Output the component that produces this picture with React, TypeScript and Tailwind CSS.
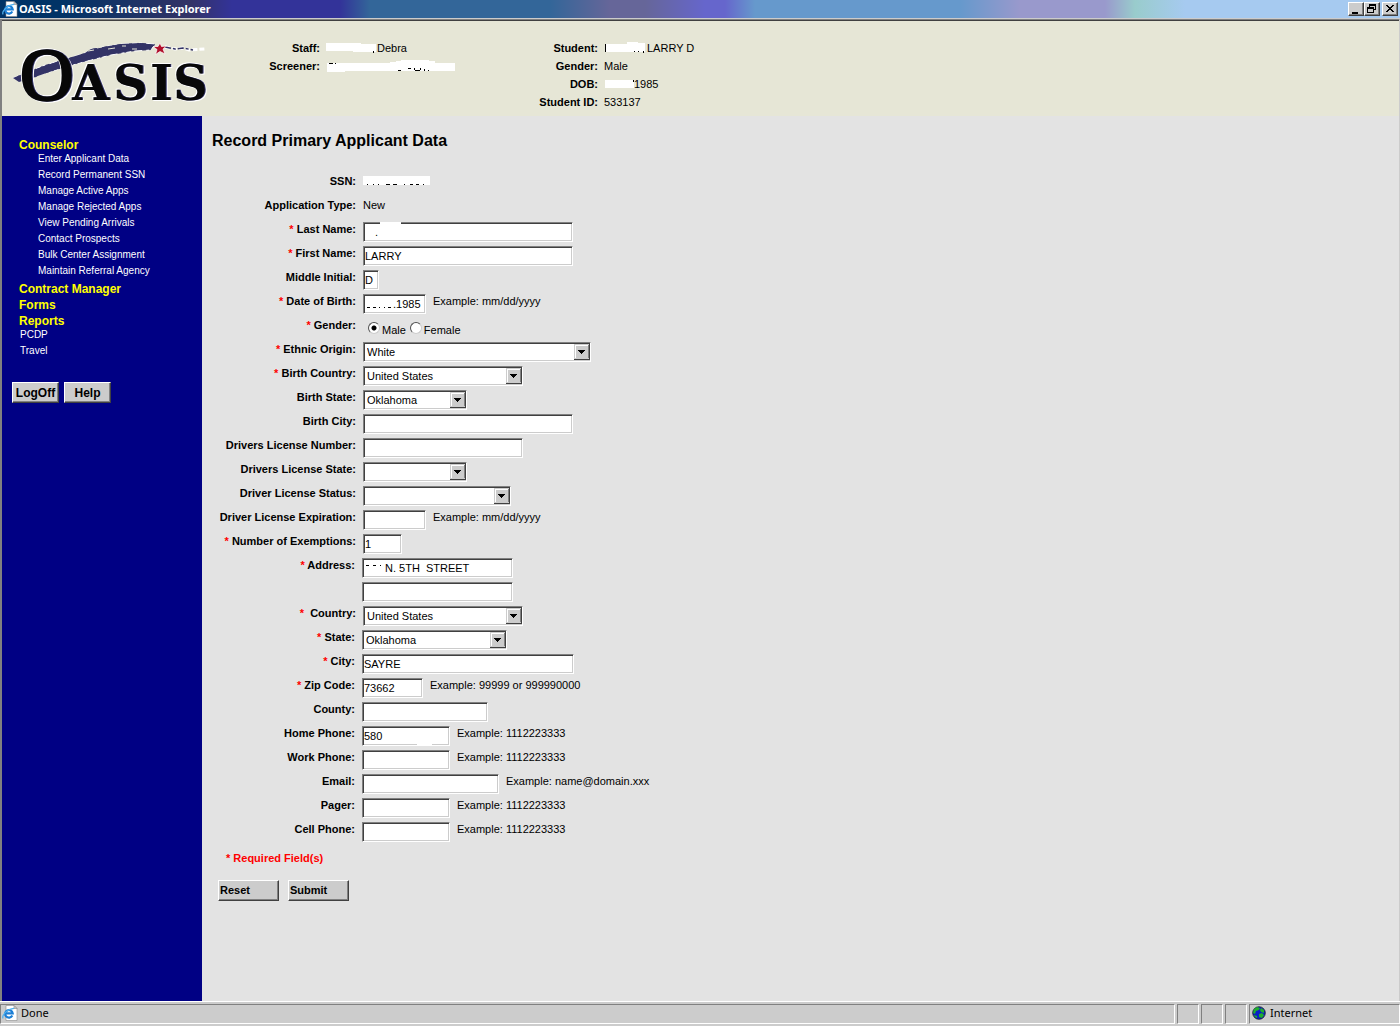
import { useState } from 'react';
import type { ReactNode } from 'react';

const SUNKEN =
  'border border-t-[#808080] border-l-[#808080] border-r-white border-b-white shadow-[inset_1px_1px_0_#404040,inset_-1px_-1px_0_#cccccc]';
const RAISED =
  'border border-t-white border-l-white border-r-[#404040] border-b-[#404040] bg-[#cccccc] shadow-[inset_-1px_-1px_0_#808080]';

const COUNSELOR_LINKS = [
  'Enter Applicant Data',
  'Record Permanent SSN',
  'Manage Active Apps',
  'Manage Rejected Apps',
  'View Pending Arrivals',
  'Contact Prospects',
  'Bulk Center Assignment',
  'Maintain Referral Agency',
];

interface RowProps {
  label: string;
  htmlFor?: string;
  required?: boolean;
  hint?: string;
  labelWidth?: string;
  children?: ReactNode;
}

function Row({ label, htmlFor, required, hint, labelWidth = 'w-[154px]', children }: RowProps) {
  return (
    <div className="flex h-6 items-start">
      <label htmlFor={htmlFor} className={`${labelWidth} mr-[7px] shrink-0 text-right font-bold leading-[18px] whitespace-nowrap`}>
        {required && <span className="text-[#ff0000]">* </span>}
        {label}
      </label>
      {children}
      {hint && <span className="ml-[7px] leading-[18px] whitespace-nowrap">{hint}</span>}
    </div>
  );
}

interface TextFieldProps {
  id: string;
  label?: string;
  value?: string;
  className: string;
  children?: ReactNode;
}

function TextField({ id, label, value = '', className, children }: TextFieldProps) {
  const [text, setText] = useState(value);
  return (
    <span className="relative mt-[2px] flex">
      <input
        id={id}
        aria-label={label}
        type="text"
        value={text}
        onChange={(e) => setText(e.target.value)}
        className={`h-5 rounded-none bg-white pr-0 outline-none ${SUNKEN} ${className}`}
      />
      {children}
    </span>
  );
}

function SelectField({ id, options, className }: { id: string; options: string[]; className: string }) {
  return (
    <span className="relative mt-[2px] flex">
      <select id={id} className={`h-5 appearance-none rounded-none bg-white pl-[3px] outline-none ${SUNKEN} ${className}`}>
        {options.map((o) => (
          <option key={o}>{o}</option>
        ))}
      </select>
      <svg className="pointer-events-none absolute top-[2px] right-px" width="16" height="16" viewBox="0 0 16 16" shapeRendering="crispEdges">
        <path fill="#404040" d="M0 0h16v16H0z" />
        <path fill="#ccc" d="M0 0h15v15H0z" />
        <path fill="#808080" d="M1 14h14V1h-1v13H1z" />
        <path fill="#fff" d="M1 1h13v1H2v12H1z" />
        <path fill="#000" d="M4 6h7v1H4zM5 7h5v1H5zM6 8h3v1H6zM7 9h1v1H7z" />
      </svg>
    </span>
  );
}

function Radio({ id, label, checked, onChange }: { id: string; label: string; checked: boolean; onChange: () => void }) {
  return (
    <span className="flex items-start">
      <input
        id={id}
        type="radio"
        name="gender"
        checked={checked}
        onChange={onChange}
        className="mt-[6px] h-3 w-3 appearance-none rounded-full border border-t-[#505050] border-l-[#505050] border-r-[#cccccc] border-b-[#cccccc] bg-white checked:bg-[radial-gradient(circle,#000_0_2px,#fff_3px)]"
      />
      <label htmlFor={id} className="ml-[2px] leading-7">{label}</label>
    </span>
  );
}

function IeIcon({ className }: { className: string }) {
  return (
    <svg className={className} width="16" height="16" viewBox="0 0 16 16">
      <path d="M4 .5h8l3 3v12H4z" fill="#fff" stroke="#8a8a8a" strokeWidth=".6" />
      <path d="M12 .5v3h3z" fill="#ccc" stroke="#8a8a8a" strokeWidth=".6" />
      <path d="M10.3 10.600A3.800 3.800 0 1 1 10.700 8.300H3.500" fill="none" stroke="#1c7fd6" strokeWidth="2.200" />
      <path d="M1.200 13.400C-.8 11 5 3.800 12 3.300" fill="none" stroke="#4db0f0" strokeWidth="1.200" />
    </svg>
  );
}

function Logo() {
  return (
    <svg className="shrink-0 overflow-visible" width="214" height="95" viewBox="2 21 214 95" role="img" aria-label="Oasis">
      <path
        d="M13 78l12-5 20-8 14-4 10-3 16-5 6-4 18-3 12-2 20-1 14 1-4 6-16 1-24 4-28 7-14 4-16 5-14 4-8 5z"
        fill="#333366"
        stroke="#fff"
        strokeWidth="1"
        strokeDasharray="5 2 3 4 8 3"
      />
      <path d="M13 78l12-5 20-7 14-5 10-3 16-5 6-4 18-3 12-2 20-1 14 2-6 4-16 1-22 4-26 7-14 4-16 5-20 7-16 5z" fill="#333366" />
      <path d="M88 51l6-1M97 48l5-1M108 49l7-1M122 46l4 0M132 49l5 0" stroke="#e6e6d6" strokeWidth="1" />
      <path d="M165 47l10 2 8-1 6 2 16-1" stroke="#fff" strokeWidth="3" strokeDasharray="5 2" fill="none" />
      <path d="M165 47l10 2 8-1 10 2" stroke="#333366" strokeWidth="1.500" strokeDasharray="6 2 3 2" fill="none" />
      <path d="M160 43l1.500 3.500 5-.5-3.500 3 2 5-5-2.500-4.500 3 1.500-5-4-3h5z" fill="#b0102c" stroke="#fff" strokeWidth=".7" />
      <g
        className="[filter:drop-shadow(1px_0_0_#333366)_drop-shadow(1px_1px_0_#fff)_drop-shadow(-1px_-1px_0_#fff)]"
        fill="#080808"
        stroke="#080808"
      >
        <text y="100" fontSize="48" strokeWidth="0" fontWeight="bold" fontFamily="DejaVu Serif, serif">
          <tspan x="20" fontSize="74" strokeWidth="2.500" fontWeight="normal" fontFamily="Liberation Serif, serif">O</tspan>
          <tspan x="72">A</tspan>
          <tspan x="113">S</tspan>
          <tspan x="150">I</tspan>
          <tspan x="173">S</tspan>
        </text>
      </g>
    </svg>
  );
}

function HeaderItem({ label, children }: { label: string; children: ReactNode }) {
  return (
    <div className="flex h-[18px] items-center">
      <dt className="w-[72px] text-right font-bold">{label}</dt>
      <dd className="ml-[6px] flex items-center whitespace-nowrap">{children}</dd>
    </div>
  );
}

function TitleBar() {
  return (
    <header className="flex h-[18px] items-center bg-[linear-gradient(90deg,#003366_0_60px,#333366_190px,#333399_232px_340px,#336699_370px_550px,#666699_610px_645px,#6666cc_705px_725px,#6699cc_755px_960px,#9999cc_1020px_1105px,#99cccc_1135px,#a6caf0_1185px)] pl-[2px]">
      <IeIcon className="shrink-0" />
      <h1 className="ml-px font-['Noto_Sans',sans-serif] text-[11px] font-bold whitespace-nowrap text-white">
        OASIS - Microsoft Internet Explorer
      </h1>
      <div className="mr-[2px] ml-auto flex">
        <button aria-label="Minimize" className={`h-[14px] w-4 ${RAISED}`}>
          <svg width="14" height="12" viewBox="0 0 14 12" shapeRendering="crispEdges"><path d="M3 9h6v2H3z" /></svg>
        </button>
        <button aria-label="Restore" className={`h-[14px] w-4 ${RAISED}`}>
          <svg width="14" height="12" viewBox="0 0 14 12" shapeRendering="crispEdges"><path d="M4 1h7v6H9v3H2V4h2zm1 2v1h4v2h1V3zM3 6v3h5V6z" fillRule="evenodd" /></svg>
        </button>
        <button aria-label="Close" className={`ml-[2px] h-[14px] w-4 ${RAISED}`}>
          <svg width="14" height="12" viewBox="0 0 14 12" shapeRendering="crispEdges"><path d="M3 2h2v1h1v1h2V3h1V2h2v1h-1v1H9v1H8v1h1v1h1v1h1v1H9V8H8V7H6v1H5v1H3V8h1V7h1V6h1V5H5V4H4V3H3z" /></svg>
        </button>
      </div>
    </header>
  );
}

function StatusBar() {
  const panel = 'border border-t-[#808080] border-l-[#808080] border-r-white border-b-white';
  return (
    <footer className="flex h-[25px] gap-[2px] border-t border-white bg-[#cccccc] pt-[2px] pb-[2px] font-['Noto_Sans',sans-serif] text-[11px] leading-4">
      <div className={`flex flex-1 items-start ${panel}`}>
        <IeIcon className="ml-px" />
        <span className="ml-[3px]">Done</span>
      </div>
      <div className={`w-[22px] ${panel}`} />
      <div className={`w-[22px] ${panel}`} />
      <div className={`w-[22px] ${panel}`} />
      <div className={`flex w-[151px] items-start ${panel}`}>
        <svg className="mt-px ml-[2px]" width="14" height="14" viewBox="0 0 14 14">
          <circle cx="7" cy="7" r="6.300" fill="#0a1fc8" stroke="#222" strokeWidth=".8" />
          <path d="M2 3l3-2 3 1-1 2-3 1-1 3-2-1zM9 2l3 2v3L9 6 8 4zM7 8l3-1 2 2-2 3-3-1zM2 9l3 1v2L3 11z" fill="#1fae2c" />
        </svg>
        <span className="ml-[4px]">Internet</span>
      </div>
    </footer>
  );
}

function Sidebar() {
  const section = 'block text-xs leading-4 font-bold text-[#ffff00]';
  return (
    <nav className="w-[200px] shrink-0 bg-[#000084] pt-[21px] text-white">
      <div className="pl-[17px] text-[10px] leading-4">
        <a href="#counselor" className={section}>Counselor</a>
        <ul className="-mt-[2px] mb-[2px] pl-[19px]">
          {COUNSELOR_LINKS.map((link) => (
            <li key={link}><a href="#link">{link}</a></li>
          ))}
        </ul>
        <a href="#contract" className={section}>Contract Manager</a>
        <a href="#forms" className={section}>Forms</a>
        <a href="#reports" className={section}>Reports</a>
        <div className="-mt-[2px] pl-px">
          <a href="#pcdp" className="block">PCDP</a>
          <a href="#travel" className="block">Travel</a>
        </div>
      </div>
      <div className="mt-[23px] flex gap-[5px] pl-[10px] text-xs font-bold text-black">
        <button className={`h-[21px] w-[47px] ${RAISED}`}>LogOff</button>
        <button className={`h-[21px] w-[47px] ${RAISED}`}>Help</button>
      </div>
    </nav>
  );
}

function ApplicantForm() {
  const [gender, setGender] = useState('Male');
  const narrow = 'w-[153px]';

  return (
    <form onSubmit={(e) => e.preventDefault()}>
      <Row label="SSN:">
        <svg className="mt-1" width="67" height="9" viewBox="0 0 67 9" shapeRendering="crispEdges">
          <path fill="#fff" d="M0 0h67v9H0z" />
          <path d="M4 8h1v1h-1zM10 8h1v1h-1zM15 8h1v1h-1zM23 8h4v1h-4zM30 8h4v1h-4zM41 8h1v1h-1zM47 8h3v1h-3zM53 8h3v1h-3zM60 8h1v1h-1z" />
        </svg>
      </Row>
      <Row label="Application Type:"><span className="leading-[18px]">New</span></Row>
      <Row label="Last Name:" htmlFor="lastName" required>
        <TextField id="lastName" value="." className="w-[210px] pl-[11px]">
          <span className="absolute top-0 left-[17px] h-[2px] w-[21px] bg-white" />
        </TextField>
      </Row>
      <Row label="First Name:" htmlFor="firstName" required>
        <TextField id="firstName" value="LARRY" className="w-[210px] pl-px" />
      </Row>
      <Row label="Middle Initial:" htmlFor="middle">
        <TextField id="middle" value="D" className="w-4 pl-px" />
      </Row>
      <Row label="Date of Birth:" htmlFor="dob" required hint="Example: mm/dd/yyyy">
        <TextField id="dob" value=".1985" className="w-[63px] pl-[29px]">
          <svg className="pointer-events-none absolute top-[12px] left-[4px]" width="26" height="2" shapeRendering="crispEdges">
            <path d="M0 1h3v1h-3zM6 1h3v1h-3zM12 1h1v1h-1zM17 1h1v1h-1zM21 1h3v1h-3z" />
          </svg>
        </TextField>
      </Row>
      <Row label="Gender:" required>
        <div className="ml-[5px] flex gap-1">
          <Radio id="male" label="Male" checked={gender === 'Male'} onChange={() => setGender('Male')} />
          <Radio id="female" label="Female" checked={gender === 'Female'} onChange={() => setGender('Female')} />
        </div>
      </Row>
      <Row label="Ethnic Origin:" htmlFor="ethnic" required>
        <SelectField id="ethnic" options={['White']} className="w-[228px]" />
      </Row>
      <Row label="Birth Country:" htmlFor="birthCountry" required>
        <SelectField id="birthCountry" options={['United States']} className="w-[160px]" />
      </Row>
      <Row label="Birth State:" htmlFor="birthState">
        <SelectField id="birthState" options={['Oklahoma']} className="w-[104px]" />
      </Row>
      <Row label="Birth City:" htmlFor="birthCity">
        <TextField id="birthCity" className="w-[210px]" />
      </Row>
      <Row label="Drivers License Number:" htmlFor="dlNumber">
        <TextField id="dlNumber" className="w-[160px]" />
      </Row>
      <Row label="Drivers License State:" htmlFor="dlState">
        <SelectField id="dlState" options={['']} className="w-[104px]" />
      </Row>
      <Row label="Driver License Status:" htmlFor="dlStatus">
        <SelectField id="dlStatus" options={['']} className="w-[148px]" />
      </Row>
      <Row label="Driver License Expiration:" htmlFor="dlExp" hint="Example: mm/dd/yyyy">
        <TextField id="dlExp" className="w-[63px]" />
      </Row>
      <Row label="Number of Exemptions:" htmlFor="exemptions" required>
        <TextField id="exemptions" value="1" className="w-[39px] pl-px" />
      </Row>
      <Row label="Address:" htmlFor="address" required labelWidth={narrow}>
        <TextField id="address" value="N. 5TH  STREET" className="w-[151px] pl-[22px]">
          <svg className="pointer-events-none absolute top-[6px] left-[4px]" width="18" height="2" shapeRendering="crispEdges">
            <path d="M0 1h3v1h-3zM7 1h3v1h-3zM14 1h1v1h-1z" />
          </svg>
        </TextField>
      </Row>
      <Row label="" labelWidth={narrow}>
        <TextField id="address2" label="Address line 2" className="w-[151px]" />
      </Row>
      <Row label={'\u00a0Country:'} htmlFor="country" required>
        <SelectField id="country" options={['United States']} className="w-[160px]" />
      </Row>
      <Row label="State:" htmlFor="state" required labelWidth={narrow}>
        <SelectField id="state" options={['Oklahoma']} className="w-[145px]" />
      </Row>
      <Row label="City:" htmlFor="city" required labelWidth={narrow}>
        <TextField id="city" value="SAYRE" className="w-[212px] pl-px" />
      </Row>
      <Row label="Zip Code:" htmlFor="zip" required labelWidth={narrow} hint="Example: 99999 or 999990000">
        <TextField id="zip" value="73662" className="w-[61px] pl-px" />
      </Row>
      <Row label="County:" htmlFor="county" labelWidth={narrow}>
        <TextField id="county" className="w-[126px]" />
      </Row>
      <Row label="Home Phone:" htmlFor="homePhone" labelWidth={narrow} hint="Example: 1112223333">
        <TextField id="homePhone" value="580" className="w-[88px] pl-px">
          <span className="absolute bottom-0 left-[55px] h-[2px] w-[15px] bg-white" />
        </TextField>
      </Row>
      <Row label="Work Phone:" htmlFor="workPhone" labelWidth={narrow} hint="Example: 1112223333">
        <TextField id="workPhone" className="w-[88px]" />
      </Row>
      <Row label="Email:" htmlFor="email" labelWidth={narrow} hint="Example: name@domain.xxx">
        <TextField id="email" className="w-[137px]" />
      </Row>
      <Row label="Pager:" htmlFor="pager" labelWidth={narrow} hint="Example: 1112223333">
        <TextField id="pager" className="w-[88px]" />
      </Row>
      <Row label="Cell Phone:" htmlFor="cellPhone" labelWidth={narrow} hint="Example: 1112223333">
        <TextField id="cellPhone" className="w-[88px]" />
      </Row>

      <p className="mt-[5px] ml-6 leading-[18px] font-bold text-[#ff0000]">* Required Field(s)</p>
      <div className="mt-[13px] ml-4 flex gap-[9px] font-bold">
        <button type="reset" className={`h-[21px] w-[61px] pl-px text-left ${RAISED}`}>Reset</button>
        <button type="submit" className={`h-[21px] w-[61px] pl-px text-left ${RAISED}`}>Submit</button>
      </div>
    </form>
  );
}

export default function App() {
  return (
    <div className="flex min-h-screen flex-col bg-[#cccccc] font-['Liberation_Sans',Arial,sans-serif] text-[11px] text-black">
      <TitleBar />
      <div className="mt-px flex flex-1 flex-col border-t border-r border-l-2 border-t-[#808080] border-r-[#cccccc] border-l-[#808080]">
        <div className="flex h-24 border-t border-[#404040] bg-[#e6e6d6]">
          <Logo />
          <dl className="mt-[18px] ml-8">
            <HeaderItem label="Staff:">
              <svg width="51" height="10" viewBox="0 0 51 10" shapeRendering="crispEdges">
                <path fill="#fff" d="M0 0h35v1h15v8H27V8H0z" />
                <path d="M47 8h1v2h-1z" />
              </svg>
              Debra
            </HeaderItem>
            <HeaderItem label="Screener:">
              <svg className="ml-px" width="128" height="12" viewBox="0 0 128 12" shapeRendering="crispEdges">
                <path fill="#fff" d="M0 3h63V2h6V1h5V0h28v1h6v2h20v8H18v1H0z" />
                <path d="M2 3h4v1h-4zM8 3h1v1h-1zM71 10h3v1h-3zM81 8h3v1h-3zM87 8h1v2h-1zM93 8h1v2h-1zM88 10h5v1h-5zM97 9h1v2h-1zM101 10h1v1h-1z" />
              </svg>
            </HeaderItem>
          </dl>
          <dl className="mt-[18px] ml-[71px]">
            <HeaderItem label="Student:">
              <svg width="43" height="12" viewBox="0 0 43 12" shapeRendering="crispEdges">
                <path fill="#fff" d="M2 2h21V0h11v1h7v9H2z" />
                <path d="M1 2h1v8H1zM30 9h1v1h-1zM34 9h1v1h-1zM39 9h1v2h-1z" />
              </svg>
              LARRY D
            </HeaderItem>
            <HeaderItem label="Gender:">Male</HeaderItem>
            <HeaderItem label="DOB:">
              <svg width="30" height="10" viewBox="0 0 30 10" shapeRendering="crispEdges">
                <path fill="#fff" d="M1 1h29v8H1z" />
                <path d="M29 1h1v2h-1z" />
              </svg>
              1985
            </HeaderItem>
            <HeaderItem label="Student ID:">533137</HeaderItem>
          </dl>
        </div>
        <div className="flex flex-1 bg-[#e3e3e3]">
          <Sidebar />
          <main className="flex-1">
            <h2 className="mt-[15px] mb-[21px] ml-[10px] text-base leading-5 font-bold">Record Primary Applicant Data</h2>
            <ApplicantForm />
          </main>
        </div>
      </div>
      <StatusBar />
    </div>
  );
}
